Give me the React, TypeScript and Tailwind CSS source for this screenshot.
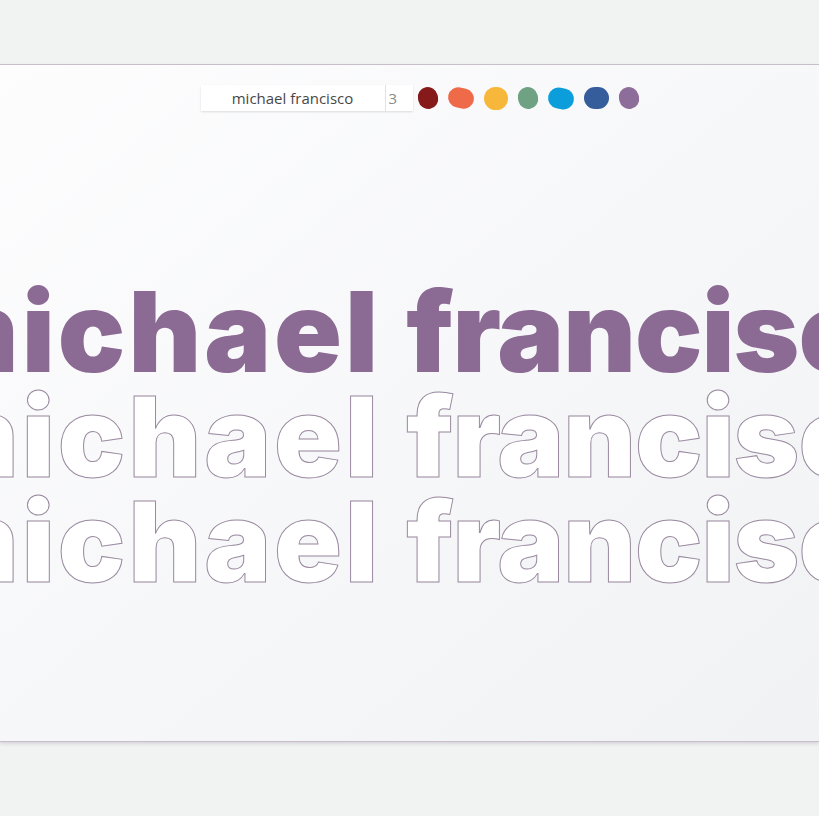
const swatches = [
  { color: "bg-[#861a1b]", size: "w-[20px] h-[22px]", rot: "-rotate-12" },
  { color: "bg-[#ef6a48]", size: "w-[26px] h-[20px]", rot: "rotate-12" },
  { color: "bg-[#f6b73a]", size: "w-[24px] h-[23px]", rot: "rotate-0" },
  { color: "bg-[#6ea282]", size: "w-[20px] h-[22px]", rot: "-rotate-12" },
  { color: "bg-[#0b9edb]", size: "w-[26px] h-[21px]", rot: "rotate-12" },
  { color: "bg-[#355c9b]", size: "w-[25px] h-[22px]", rot: "rotate-0" },
  { color: "bg-[#8d6d99]", size: "w-[20px] h-[22px]", rot: "-rotate-12" },
];

const name = "michael francisco";

// first word set a bit looser than the second, to track the original face
const Line = ({ className }: { className: string }) => (
  <div className={className}>
    <span className="tracking-[3px]">michael </span>
    <span className="tracking-[-1px]">francisco</span>
  </div>
);

export default function App() {
  return (
    <div className="min-h-[816px] bg-[#f0f3f2] pt-16">
      <div className="h-[678px] overflow-hidden border-y border-[#c8bdca] bg-gradient-to-br from-[#fdfdfe] to-[#f1f2f4] shadow-[0_2px_3px_rgba(150,130,160,0.25)]">
        <div className="mt-5 flex items-center justify-center gap-[5px] pl-[20px]">
          <div className="flex h-[26px] items-stretch bg-white shadow-[0_1px_2px_rgba(0,0,0,0.12)]">
            <div className="flex w-[184px] items-center justify-center font-['Open_Sans',sans-serif] text-[15px] text-[#474747]">
              {name}
            </div>
            <div className="flex w-[28px] items-center border-l border-[#e2e2e2] pl-[3px] font-['Open_Sans',sans-serif] text-[15px] text-[#8a8a8a]">
              3
            </div>
          </div>
          <div className="flex items-center gap-[10px]">
            {swatches.map((s, i) => (
              <div key={i} className={`rounded-full ${s.color} ${s.size} ${s.rot}`} />
            ))}
          </div>
        </div>

        <div className="mt-[168px] flex flex-col items-center whitespace-nowrap pl-[28px] font-['Inter',sans-serif] text-[112px] font-black leading-[105px]">
          <Line className="text-[#8b6a94]" />
          <Line className="text-white [-webkit-text-stroke:1px_#9a8aa0]" />
          <Line className="text-white [-webkit-text-stroke:1px_#9a8aa0]" />
        </div>
      </div>
    </div>
  );
}
